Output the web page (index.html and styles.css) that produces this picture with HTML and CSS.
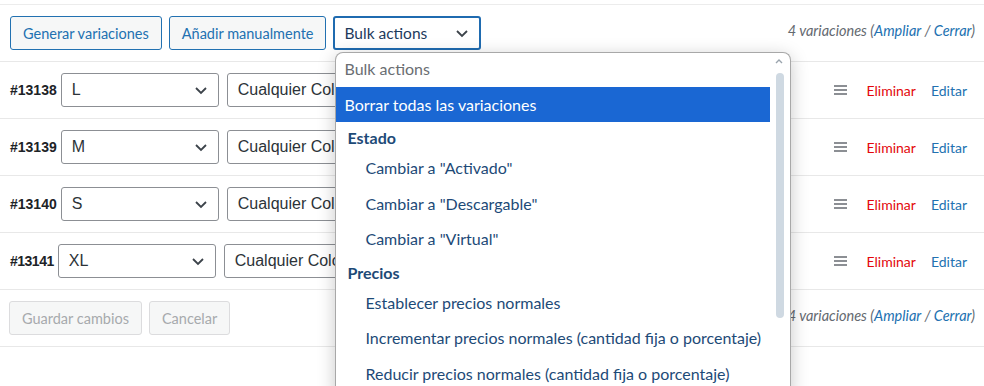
FILE: index.html
```html
<!DOCTYPE html>
<html lang="es">
<head>
  <meta charset="UTF-8">
  <meta name="viewport" content="width=device-width, initial-scale=1.0">
  <title>Variaciones</title>
  <link rel="stylesheet" href="styles.css">
</head>
<body>
  <div class="panel">
    <div class="toolbar">
      <button class="btn">Generar variaciones</button>
      <button class="btn">Añadir manualmente</button>
      <div class="bulk">
        <div class="bulk-select">
          <span>Bulk actions</span>
          <svg width="14" height="9" viewBox="0 0 14 9"><path d="M2 2l5 5 5-5" fill="none" stroke="#3c434a" stroke-width="1.8"/></svg>
        </div>
        <div class="bulk-menu">
          <div class="menu-list">
            <div class="opt placeholder">Bulk actions</div>
            <div class="opt selected">Borrar todas las variaciones</div>
            <div class="group">Estado</div>
            <div class="opt sub">Cambiar a "Activado"</div>
            <div class="opt sub">Cambiar a "Descargable"</div>
            <div class="opt sub">Cambiar a "Virtual"</div>
            <div class="group">Precios</div>
            <div class="opt sub">Establecer precios normales</div>
            <div class="opt sub">Incrementar precios normales (cantidad fija o porcentaje)</div>
            <div class="opt sub">Reducir precios normales (cantidad fija o porcentaje)</div>
          </div>
          <svg class="scroll-up" width="8" height="6" viewBox="0 0 8 6"><path d="M1 5l3-3 3 3" fill="none" stroke="#9aa4ad" stroke-width="1.4"/></svg>
          <div class="scroll-thumb"></div>
        </div>
      </div>
      <span class="count">4 variaciones (<a href="#">Ampliar</a> / <a href="#">Cerrar</a>)</span>
    </div>

    <div class="row">
      <strong class="var-id">#13138</strong>
      <div class="select size"><span>L</span><svg width="14" height="9" viewBox="0 0 14 9"><path d="M2 2l5 5 5-5" fill="none" stroke="#3c434a" stroke-width="1.8"/></svg></div>
      <div class="select color"><span>Cualquier Colo</span></div>
      <div class="actions">
        <span class="handle"></span>
        <a href="#" class="delete">Eliminar</a>
        <a href="#" class="edit">Editar</a>
      </div>
    </div>
    <div class="row">
      <strong class="var-id">#13139</strong>
      <div class="select size"><span>M</span><svg width="14" height="9" viewBox="0 0 14 9"><path d="M2 2l5 5 5-5" fill="none" stroke="#3c434a" stroke-width="1.8"/></svg></div>
      <div class="select color"><span>Cualquier Colo</span></div>
      <div class="actions">
        <span class="handle"></span>
        <a href="#" class="delete">Eliminar</a>
        <a href="#" class="edit">Editar</a>
      </div>
    </div>
    <div class="row">
      <strong class="var-id">#13140</strong>
      <div class="select size"><span>S</span><svg width="14" height="9" viewBox="0 0 14 9"><path d="M2 2l5 5 5-5" fill="none" stroke="#3c434a" stroke-width="1.8"/></svg></div>
      <div class="select color"><span>Cualquier Colo</span></div>
      <div class="actions">
        <span class="handle"></span>
        <a href="#" class="delete">Eliminar</a>
        <a href="#" class="edit">Editar</a>
      </div>
    </div>
    <div class="row">
      <strong class="var-id narrow">#13141</strong>
      <div class="select size"><span>XL</span><svg width="14" height="9" viewBox="0 0 14 9"><path d="M2 2l5 5 5-5" fill="none" stroke="#3c434a" stroke-width="1.8"/></svg></div>
      <div class="select color"><span>Cualquier Colo</span></div>
      <div class="actions">
        <span class="handle"></span>
        <a href="#" class="delete">Eliminar</a>
        <a href="#" class="edit">Editar</a>
      </div>
    </div>

    <div class="toolbar footer">
      <button class="btn" disabled>Guardar cambios</button>
      <button class="btn" disabled>Cancelar</button>
      <span class="count">4 variaciones (<a href="#">Ampliar</a> / <a href="#">Cerrar</a>)</span>
    </div>
  </div>
</body>
</html>
```

FILE: styles.css
```css
html, body {
  overflow: hidden;
}
body {
  margin: 0;
  padding-top: 4px;
  height: 382px;
  background: #fff;
  font-family: "Lato", "Open Sans", sans-serif;
  color: #1d2327;
}
.panel {
  border-top: 1px solid #ececec;
}
.toolbar {
  display: flex;
  align-items: center;
  gap: 7px;
  height: 57px;
  padding: 0 9px 0 10px;
  border-bottom: 1px solid #e8e8e8;
  box-sizing: border-box;
}
.btn {
  height: 34px;
  padding: 0 12px;
  border: 1px solid #2271b1;
  border-radius: 3px;
  background: #f6f7f7;
  color: #2271b1;
  font-family: inherit;
  font-size: 14.5px;
}
.btn:disabled {
  border-color: #dcdcde;
  color: #a7aaad;
}
.footer {
  padding-left: 9px;
}
.bulk {
  position: relative;
}
.bulk-select {
  display: flex;
  align-items: center;
  justify-content: space-between;
  width: 148px;
  height: 34px;
  padding: 0 10px 0 9px;
  box-sizing: border-box;
  border: 2px solid #1f6bb0;
  border-radius: 3px;
  color: #1d3a5c;
  font-size: 15.5px;
}
.bulk-menu {
  position: absolute;
  top: 36px;
  left: 2px;
  width: 456px;
  height: 345px;
  box-sizing: border-box;
  background: #fff;
  border: 1px solid #a8a8a8;
  border-bottom: none;
  border-radius: 8px 8px 0 0;
  box-shadow: 0 4px 18px rgba(0, 0, 0, 0.22);
  z-index: 5;
  overflow: hidden;
}
.menu-list {
  width: 434px;
}
.opt {
  height: 36px;
  line-height: 36px;
  padding-left: 8px;
  font-size: 16px;
  color: #1d4a77;
  white-space: nowrap;
}
.opt.placeholder {
  height: 34px;
  line-height: 32px;
  color: #6a6e72;
}
.opt.selected {
  height: 35px;
  line-height: 35px;
  background: #1a67d3;
  color: #fff;
}
.opt.sub {
  padding-left: 29px;
  height: 35.5px;
  line-height: 35px;
}
.group {
  padding: 6px 0 2px 11px;
  line-height: 20px;
  font-size: 16px;
  font-weight: 700;
  color: #1d4a77;
}
.scroll-up {
  position: absolute;
  top: 5px;
  right: 7px;
}
.scroll-thumb {
  position: absolute;
  top: 20px;
  right: 6px;
  width: 8px;
  height: 245px;
  border-radius: 4px;
  background: #cfd9e2;
}
.count {
  margin-left: auto;
  margin-bottom: 6px;
  font-style: italic;
  font-size: 14.5px;
  color: #646970;
}
.count a {
  color: #2271b1;
  text-decoration: none;
}
.row {
  display: flex;
  align-items: center;
  height: 57px;
  padding: 0 17px 0 10px;
  border-bottom: 1px solid #e8e8e8;
  box-sizing: border-box;
}
.var-id {
  margin-right: 4px;
  font-family: "Liberation Sans", Arial, sans-serif;
  font-size: 14px;
  color: #1d2327;
}
.var-id.narrow {
  letter-spacing: -0.5px;
}
.select {
  display: flex;
  align-items: center;
  justify-content: space-between;
  height: 34px;
  padding: 0 10px;
  box-sizing: border-box;
  border: 1px solid #8c8f94;
  border-radius: 3px;
  font-family: "Liberation Sans", Arial, sans-serif;
  font-size: 16px;
  color: #2c3338;
}
.select.size {
  width: 158px;
  margin-right: 8px;
}
.select.color {
  width: 200px;
  white-space: nowrap;
  overflow: hidden;
}
.actions {
  display: flex;
  align-items: center;
  margin-left: auto;
  font-size: 14px;
}
.handle {
  width: 13px;
  height: 2px;
  margin-right: 19px;
  background: #8c8f94;
  box-shadow: 0 4px 0 #8c8f94, 0 -4px 0 #8c8f94;
}
.actions a {
  text-decoration: none;
}
.delete {
  color: #e3070b;
  margin-right: 15px;
}
.edit {
  color: #2271b1;
}
```
